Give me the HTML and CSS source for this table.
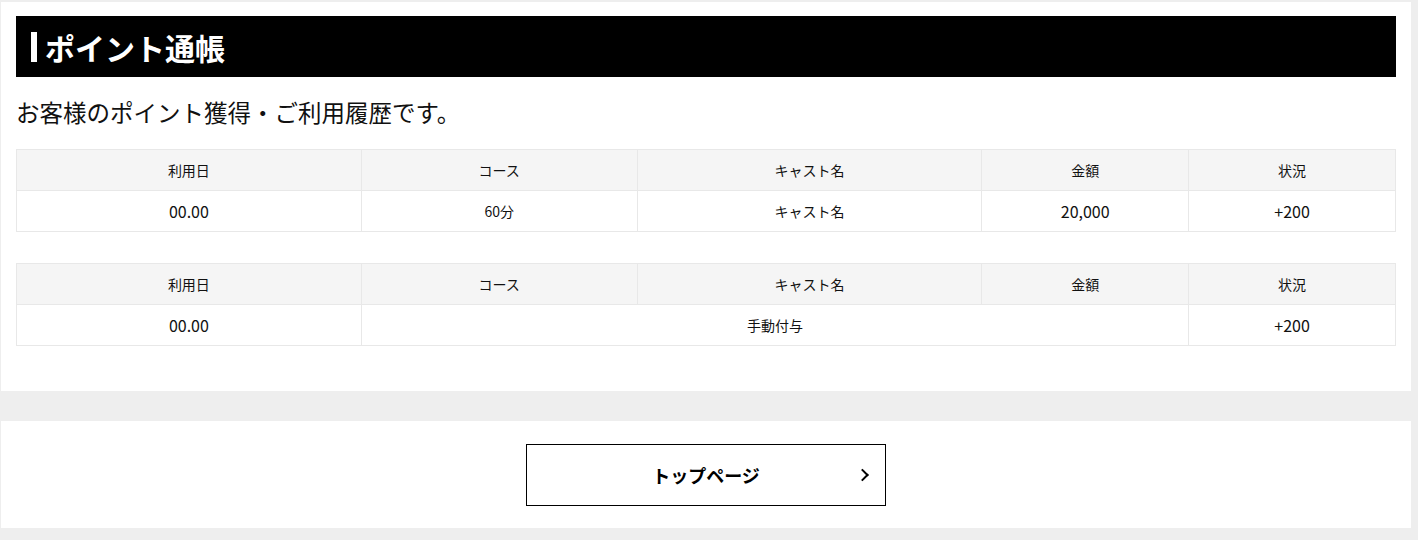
FILE: index.html
```html
<!DOCTYPE html>
<html lang="ja">
<head>
<meta charset="utf-8">
<title>ポイント通帳</title>
<link rel="stylesheet" href="styles.css">
</head>
<body>
<div class="page">
  <section class="panel main">
    <h1 class="title"><span class="title-bar"></span>ポイント通帳</h1>
    <p class="lead">お客様のポイント獲得・ご利用履歴です。</p>
    <table class="history">
      <colgroup>
        <col class="c25"><col class="c20"><col class="c25"><col class="c15"><col class="c15">
      </colgroup>
      <thead>
        <tr><th>利用日</th><th>コース</th><th>キャスト名</th><th>金額</th><th>状況</th></tr>
      </thead>
      <tbody>
        <tr><td class="num">00.00</td><td>60分</td><td class="sm">キャスト名</td><td class="num">20,000</td><td class="num">+200</td></tr>
      </tbody>
    </table>
    <table class="history">
      <colgroup>
        <col class="c25"><col class="c20"><col class="c25"><col class="c15"><col class="c15">
      </colgroup>
      <thead>
        <tr><th>利用日</th><th>コース</th><th>キャスト名</th><th>金額</th><th>状況</th></tr>
      </thead>
      <tbody>
        <tr><td class="num">00.00</td><td colspan="3" class="sm">手動付与</td><td class="num">+200</td></tr>
      </tbody>
    </table>
  </section>
  <section class="panel foot">
    <a class="btn" href="#">トップページ<span class="chev"></span></a>
  </section>
</div>
</body>
</html>
```
FILE: styles.css
```css
html, body {
  margin: 0;
  padding: 0;
  background: #eeeeee;
}
body {
  font-family: "Noto Sans CJK JP", "Noto Sans", sans-serif;
  color: #111;
}
.page {
  width: 1410px;
  margin-left: 1px;
  padding-top: 2px;
  padding-bottom: 12px;
}
.panel {
  background: #fff;
}
.main {
  padding: 14px 15px 14px;
}
.title {
  margin: 0;
  height: 61px;
  background: #000;
  color: #fff;
  display: flex;
  align-items: center;
  padding-left: 15px;
  font-size: 30px;
  font-weight: 700;
  line-height: 1;
  letter-spacing: 0;
}
.title-bar {
  display: block;
  width: 6px;
  height: 30px;
  background: #fff;
  margin-right: 8px;
}
.lead {
  margin: 19px 0 21px;
  font-size: 23.5px;
  line-height: 32px;
  color: #111;
}
.history {
  width: 100%;
  border-collapse: collapse;
  table-layout: fixed;
  margin-bottom: 31px;
}
.c25 { width: 25%; }
.c20 { width: 20%; }
.c15 { width: 15%; }
.history th,
.history td {
  border: 1px solid #e8e8e8;
  text-align: center;
  padding: 0;
  color: #111;
}
.history th {
  background: #f5f5f5;
  font-weight: 400;
  font-size: 14px;
  height: 40px;
}
.history td {
  height: 40px;
  font-size: 14px;
}
.history td.num {
  font-size: 16px;
}
.foot {
  margin-top: 30px;
  height: 107px;
  display: flex;
  justify-content: center;
  align-items: flex-start;
  padding-top: 23px;
  box-sizing: border-box;
}
.btn {
  position: relative;
  display: flex;
  align-items: center;
  justify-content: center;
  width: 360px;
  height: 62px;
  box-sizing: border-box;
  border: 1px solid #000;
  color: #000;
  text-decoration: none;
  font-weight: 700;
  font-size: 18px;
}
.chev {
  position: absolute;
  right: 18px;
  top: 50%;
  width: 7px;
  height: 7px;
  border-top: 2px solid #000;
  border-right: 2px solid #000;
  transform: translateY(-50%) rotate(45deg);
}
```
